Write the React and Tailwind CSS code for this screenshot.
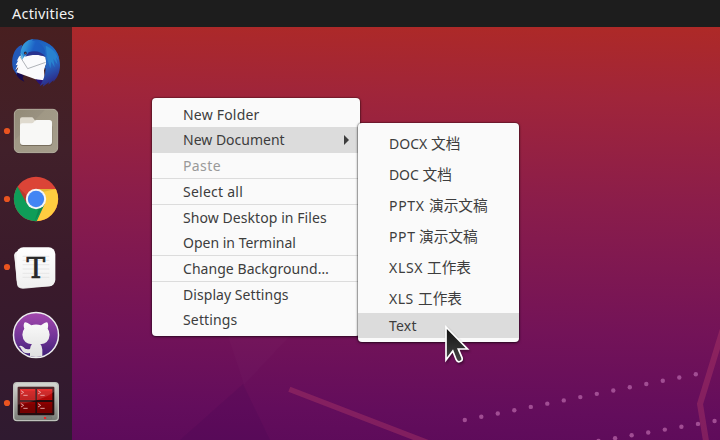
const desktopItems = [
  { label: 'New Folder', tracking: 'tracking-[0.2px]' },
  { label: 'New Document', active: true, arrow: true, line: true },
  { label: 'Paste', disabled: true, line: true, tracking: 'tracking-[0.4px]' },
  { label: 'Select all', line: true, tracking: 'tracking-[0.25px]' },
  { label: 'Show Desktop in Files', tracking: 'tracking-[0.07px]' },
  { label: 'Open in Terminal', line: true },
  { label: 'Change Background…', line: true, tracking: 'tracking-[0.05px]' },
  { label: 'Display Settings', tracking: 'tracking-[0.06px]' },
  { label: 'Settings', tracking: 'tracking-[0.15px]' },
];

const templates = [
  { format: 'DOCX', kind: '文档', box: 'w-[42px]' },
  { format: 'DOC', kind: '文档', box: 'w-[33.5px] tracking-[-0.1px]' },
  { format: 'PPTX', kind: '演示文稿', box: 'w-[40px] tracking-[0.7px]' },
  { format: 'PPT', kind: '演示文稿', box: 'w-[30px] tracking-[0.6px]' },
  { format: 'XLSX', kind: '工作表', box: 'w-[38px] tracking-[0.7px]' },
  { format: 'XLS', kind: '工作表', box: 'w-[29px] tracking-[0.5px]' },
];

function Wallpaper() {
  return (
    <svg className="absolute inset-0" width="720" height="440" viewBox="0 0 720 440">
      <path d="M228 336H290L244 385Z" fill="#fff" opacity=".015" />
      <path d="M243 384L180 440H270Z" fill="#26004a" opacity=".09" />
      <g fill="none" stroke="#b13a66" strokeOpacity=".42" strokeWidth="5.5">
        <path d="M289.3 389.3L430 443.5" />
        <path d="M723 329L700 404L706.5 444" strokeWidth="6" />
      </g>
      <g fill="#a8559a" opacity=".9">
        {Array.from({ length: 15 }, (_, i) => (
          <circle key={i} cx={464.8 + i * 16.5} cy={420 - i * 3.27} r="2.2" />
        ))}
        {Array.from({ length: 8 }, (_, i) => (
          <circle key={i} cx={598.5 + i * 16.58} cy={441 - i * 2.85} r="2.2" />
        ))}
      </g>
    </svg>
  );
}

function Slot({ running, box = '0 -3 216 204', children }) {
  return (
    <svg className="block h-[68px] w-[72px] shrink-0" viewBox={box}>
      {running && <circle cx="21" cy="99" r="9.3" fill="#e95420" />}
      {children}
    </svg>
  );
}

function Thunderbird() {
  return (
    <Slot box="0 87 216 204">
      <defs>
        <linearGradient id="tbWing" x1="0" y1="0" x2=".3" y2="1">
          <stop offset="0" stopColor="#1d5cbd" />
          <stop offset=".45" stopColor="#2271c8" />
          <stop offset=".7" stopColor="#2760bd" />
          <stop offset="1" stopColor="#2c2f8c" />
        </linearGradient>
        <linearGradient id="tbHead" x1="0" y1="0" x2="1" y2=".3">
          <stop offset="0" stopColor="#3fa6dd" />
          <stop offset=".3" stopColor="#2f90d8" />
          <stop offset=".6" stopColor="#1d5fc4" />
          <stop offset="1" stopColor="#1d5cbd" />
        </linearGradient>
      </defs>
      <path d="M43 208C47 226 58 239 73 245L68 235L71 227L45 204Z" fill="#160a50" />
      <path d="M66 134C40 143 32 178 39 206L45 216L51 224L50 204L62 172Z" fill="#2259b9" />
      <path d="M84 122L99 118C136 118 168 140 177 172L140 215L136 172L80 150Z" fill="#1d5cbd" />
      <path d="M58 168C75 162 116 161 136 170L139 190L132 211L134 235L127 245L49 217L55 202L46 211L53 194L47 196L55 181L50 184Z" fill="#fafafc" />
      <path d="M59 168L83 206L137 187" fill="none" stroke="#989ba2" strokeWidth="2.3" />
      <path d="M106 238L132 241L122 255Q113 249 106 238Z" fill="#281477" />
      <path d="M100 121C151 121 180 155 180 195C180 217 172 235 159 246L161 240L145 254L147 247L128 260L131 251L119 259L129 241L135 223L137 204L133 207L139 190L137 172C132 150 121 137 98 134Z" fill="url(#tbWing)" />
      <path d="M137 137C155 144 172 158 176 183L168 172L172 193L160 176L164 202L154 185L151 205L143 181Z" fill="#2882cf" />
      <path d="M66 178C58 158 62 133 85 121L99 117L96 122C124 123 139 145 137 170C122 158 90 157 74 169Z" fill="url(#tbHead)" />
      <path d="M86 157C105 150 126 155 137 171C119 163 94 164 75 170Z" fill="#28338f" />
      <path d="M61 158L71 172L67 180Z" fill="#68b7df" />
      <circle cx="76" cy="159" r="4.5" fill="#292843" />
      <circle cx="76" cy="160" r="1.8" fill="#a65c4a" />
    </Slot>
  );
}

function Files() {
  return (
    <Slot running>
      <defs>
        <linearGradient id="filesBg" x1="0" y1="0" x2="1" y2="1">
          <stop offset="0" stopColor="#928a76" />
          <stop offset=".35" stopColor="#999180" />
          <stop offset=".37" stopColor="#a09885" />
          <stop offset="1" stopColor="#a59d8b" />
        </linearGradient>
      </defs>
      <rect x="41" y="34" width="134" height="133" rx="16" fill="#200c14" opacity=".6" />
      <rect x="43" y="34" width="130" height="130" rx="14" fill="url(#filesBg)" stroke="#b5ae9e" strokeWidth="3" />
      <path d="M60 82V64Q60 58 66 58H95Q99 58 101 62L107 70H150V82Z" fill="#dfdace" />
      <rect x="60" y="78" width="97" height="66" rx="9" fill="#776e5d" />
      <path d="M60 82Q60 76 67 76H95Q99 76 101 73L104 69Q106 66 110 66H148Q156 66 156 74V132Q156 141 147 141H69Q60 141 60 132Z" fill="#f8f8f6" />
    </Slot>
  );
}

function Chrome() {
  return (
    <Slot running>
      <defs>
        <clipPath id="chromeDisc"><circle cx="108" cy="99" r="66.5" /></clipPath>
      </defs>
      <g clipPath="url(#chromeDisc)">
        <rect x="40" y="30" width="136" height="138" fill="#db4437" />
        <path d="M53 62L34 40V180H104L134 116L108 99L80 112Z" fill="#0f9d58" />
        <path d="M108 69H180V180H104L134 114Z" fill="#ffcd40" />
        <path d="M108 69H168L128 78Z" fill="#b38c24" opacity=".35" />
        <path d="M53 62L81 113L83 91Z" fill="#6c241c" opacity=".3" />
        <path d="M104 166L134 114L116 128Z" fill="#064d30" opacity=".25" />
      </g>
      <circle cx="108" cy="99" r="30.5" fill="#f5f5f5" />
      <circle cx="108" cy="99" r="24.5" fill="#4285f4" />
    </Slot>
  );
}

function Typora() {
  return (
    <Slot running>
      <defs>
        <linearGradient id="paper" x1="0" y1="0" x2="0" y2="1">
          <stop offset="0" stopColor="#fff" />
          <stop offset="1" stopColor="#f0f0f0" />
        </linearGradient>
      </defs>
      <path d="M43 67Q42 54 55 51L150 45L162 145Q160 154 150 157L70 164Q53 165 51 151Z" fill="#d9d9d9" />
      <path d="M43 64Q43 55 53 52L145 44L158 148Q155 155 147 156L69 162Q55 162 52 151Z" fill="#f1f1f1" />
      <rect x="50" y="40" width="116" height="117" rx="20" fill="url(#paper)" />
      <path d="M68 67H148M68 79H148M68 92H148M68 105H148M68 118H148M68 130H148" stroke="#dedede" strokeWidth="2" />
      <text x="107.500" y="130.500" textAnchor="middle" fontFamily="DejaVu Serif, serif" fontSize="86" fill="#292929" stroke="#292929" strokeWidth="2" textLength="56" lengthAdjust="spacingAndGlyphs">T</text>
    </Slot>
  );
}

function GitHub() {
  return (
    <Slot>
      <defs>
        <linearGradient id="ghBg" x1="0" y1="0" x2="0" y2="1">
          <stop offset="0" stopColor="#a448ad" />
          <stop offset=".55" stopColor="#713497" />
          <stop offset="1" stopColor="#3d2074" />
        </linearGradient>
        <linearGradient id="ghCat" x1="0" y1="0" x2="0" y2="1">
          <stop offset="0" stopColor="#fafafa" />
          <stop offset="1" stopColor="#dedede" />
        </linearGradient>
        <clipPath id="ghDisc"><circle cx="108" cy="99" r="66" /></clipPath>
      </defs>
      <circle cx="108" cy="99" r="67.5" fill="url(#ghBg)" stroke="#ededee" strokeWidth="4.500" />
      <path clipPath="url(#ghDisc)" d="M73 62Q77 58 94 70Q108 65 123 70Q139 58 143 62Q146 70 143 80Q149 87 149 98Q147 124 121 127Q127 132 127 143V170H90V153Q71 156 65 143Q62 135 57 133Q61 128 70 135Q76 144 90 141Q90 132 96 127Q69 124 67 98Q67 87 73 80Q69 70 73 62Z" fill="url(#ghCat)" />
    </Slot>
  );
}

function Terminator() {
  const panes = [[60, 57], [111, 57], [60, 96], [111, 96]];
  return (
    <Slot running>
      <defs>
        <linearGradient id="termRed" gradientUnits="userSpaceOnUse" x1="0" y1="55" x2="0" y2="132">
          <stop offset="0" stopColor="#e51818" />
          <stop offset=".44" stopColor="#b80808" />
          <stop offset=".55" stopColor="#8d0000" />
          <stop offset="1" stopColor="#740000" />
        </linearGradient>
        <linearGradient id="termFrame" x1="0" y1="0" x2="0" y2="1">
          <stop offset="0" stopColor="#d8dad5" />
          <stop offset=".6" stopColor="#9b9e98" />
          <stop offset="1" stopColor="#777a74" />
        </linearGradient>
      </defs>
      <rect x="39" y="38" width="138" height="118" rx="13" fill="#191319" opacity=".6" />
      <rect x="41" y="38" width="134" height="114" rx="10" fill="url(#termFrame)" stroke="#bec1bb" strokeWidth="4" />
      <rect x="53" y="50" width="110" height="86" rx="3" fill="#230b0e" />
      {panes.map(([x, y]) => (
        <g key={`${x}-${y}`}>
          <rect x={x} y={y} width="46" height="33" fill="url(#termRed)" />
          <path d={`M${x} ${y + 9}h46M${x} ${y + 15}h46M${x} ${y + 21}h46M${x} ${y + 27}h46`} stroke="#460000" strokeOpacity=".35" strokeWidth="2" />
          <path d={`M${x + 3} ${y + 5}l8 5l-8 5M${x + 10} ${y + 19}h13`} fill="none" stroke="#f1baba" strokeWidth="2.5" />
        </g>
      ))}
      <path d="M53 50H163V65Q128 91 53 104Z" fill="#ff9a9a" opacity=".2" />
      <rect x="139" y="139" width="16" height="9" rx="3" fill="#777b76" stroke="#656963" />
      <circle cx="135" cy="144" r="3.500" fill="#f51e22" />
    </Slot>
  );
}

const font = "font-['Noto_Sans','Noto_Sans_CJK_SC',sans-serif]";

export default function App() {
  return (
    <div className={`relative flex h-[440px] w-[720px] flex-col overflow-hidden bg-[linear-gradient(181deg,#b32c24_0%,#ad2928_7%,#a0253a_22%,#8b1d4a_45%,#731358_74%,#630d5c_92%,#5d0b5a_100%)] text-[14px] text-[#3d3d3d] ${font}`}>
      <Wallpaper />
      <header className="relative flex h-[27px] shrink-0 items-center bg-[#1d1d1d] px-3 text-[14.5px] tracking-[0.2px] text-[#f2f2f2]">
        Activities
      </header>
      <main className="relative flex min-h-0 flex-1">
        <nav className="flex w-[72px] shrink-0 flex-col bg-[linear-gradient(180deg,#481f20_0%,#41202a_30%,#3a1a2b_60%,#2f1a30_100%)] pt-[2px]">
          <Thunderbird />
          <Files />
          <Chrome />
          <Typora />
          <GitHub />
          <Terminator />
        </nav>
      </main>

      <ul className="absolute left-[152px] top-[98px] w-[208px] overflow-hidden rounded-[4px] bg-[#fafafa] py-1 shadow-[0_0_1px_1px_rgba(0,0,0,0.22),0_1px_3px_rgba(0,0,0,0.45)]">
        {desktopItems.map((item) => (
          <li key={item.label} className={`${item.line ? 'h-[26px] border-b border-[#dcdcdc]' : 'h-[25px]'} ${item.active ? 'bg-[#dcdcdc]' : ''} ${item.disabled ? 'text-[#999]' : ''} flex items-center justify-between pl-[31px] pr-[11px]`}>
            <span className={`whitespace-nowrap leading-[25px] ${item.tracking || ''}`}>{item.label}</span>
            {item.arrow && <svg width="5" height="10" viewBox="0 0 5 10"><path d="M0 0L5 5L0 10Z" fill="#3d3d3d" /></svg>}
          </li>
        ))}
      </ul>

      <ul className="absolute left-[358px] top-[123px] w-[161px] overflow-hidden rounded-[4px] bg-[#fafafa] py-1 shadow-[0_0_1px_1px_rgba(0,0,0,0.25),0_1px_3px_rgba(0,0,0,0.5)]">
        {templates.map(({ format, kind, box }) => (
          <li key={format} className="flex h-[31px] items-baseline whitespace-nowrap pl-[31px] pt-1 leading-[25px]">
            <span className={`shrink-0 ${box}`}>{format}</span>{' '}
            <span className="text-[14.67px]">{kind}</span>
          </li>
        ))}
        <li className="flex h-[25px] items-center bg-[#dcdcdc] pl-[31px] tracking-[0.2px]">Text</li>
      </ul>

      <svg className="absolute left-[440px] top-[320px] drop-shadow-[1px_2px_1px_rgba(0,0,0,0.35)]" width="34" height="48" viewBox="440 320 34 48">
        <defs>
          <linearGradient id="pointer" x1="0" y1="0" x2="0" y2="1">
            <stop offset="0" stopColor="#111" />
            <stop offset="1" stopColor="#444" />
          </linearGradient>
        </defs>
        <path d="M446 327V360L452.800 351L456.200 359.700Q457.500 362.500 460 361.500Q463 360.500 462 357.600L458.300 349H467.500Z" fill="url(#pointer)" stroke="#fff" strokeWidth="1.700" />
      </svg>
    </div>
  );
}
